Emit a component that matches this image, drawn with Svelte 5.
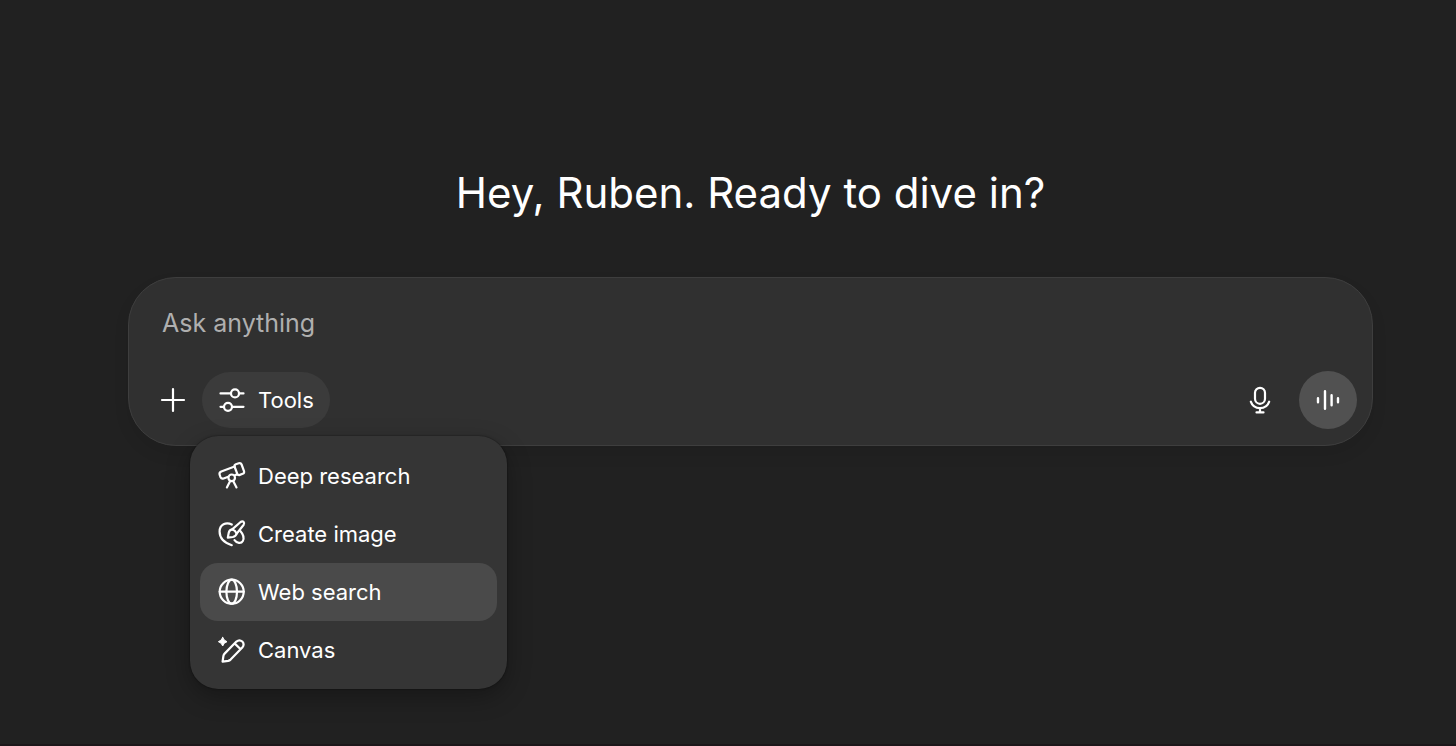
<script lang="ts">
	let prompt = $state('');
	let menuOpen = $state(true);
	let active = $state('web');

	const tools = [
		{ id: 'research', text: 'Deep research' },
		{ id: 'image', text: 'Create image' },
		{ id: 'web', text: 'Web search' },
		{ id: 'canvas', text: 'Canvas' }
	];
</script>

{#snippet icon(name: string)}
	<svg class="icon" viewBox="0 0 28 28" aria-hidden="true">
		{#if name === 'plus'}
			<path d="M14 3v22M3 14h22" />
		{:else if name === 'sliders'}
			<path d="M2.5 7.4h10.3M21 7.4h4.5M2.5 20.8h3.3M14.2 20.8h11.3" />
			<circle cx="17" cy="7.4" r="4" />
			<circle cx="10" cy="20.8" r="4" />
		{:else if name === 'mic'}
			<rect x="9" y="1.8" width="10" height="16" rx="5" />
			<path d="M4.8 15.7C6.2 19.8 9.6 22.200 14 22.200s7.800-2.400 9.200-6.500M14 22.200v4.200M10.500 26.400h7" />
		{:else if name === 'voice'}
			<path class="bars" d="M4 12.200v4M11 5.200v17.600M17.600 9.200v10M24 12.200v4" />
		{:else if name === 'research'}
			<path d="M17.8 2.300 20.800 1.200Q22.800.5 23.600 2.500L26 9.100Q26.700 11.100 24.700 11.800L21.800 12.900Q20 13.500 19.200 11.700L16.700 5Q16 3 17.800 2.300Z" />
			<path d="M16.600 4.500 3.300 9.500Q1 10.500 1.600 12.700L2.500 15.200Q3.400 17.200 5.600 16.500L10.300 14.800M17.200 13.100 19.400 12.300" />
			<circle cx="13.700" cy="15.800" r="3.300" />
			<path d="M12.200 18.900 8.900 25.400M15.200 18.900 18.500 25.400" />
		{:else if name === 'image'}
			<path d="M13.800 25.200C6 22.700 1.600 17.500 1.600 11.500 1.600 4.600 8 1.600 13.800 4.600" />
			<path d="M14.200 9.300 22.600 2Q24.400.8 25.600 1.900 26.800 3.200 25.700 4.700L18.700 13.600" />
			<path d="M14.200 9.300Q11.400 9.800 10.800 12.500L9.800 17.600 14.800 17Q18 16.500 18.700 13.600 17.500 10.500 14.200 9.300Z" />
			<path d="M22.500 11.200C25 14 26.300 18 24.800 21 23.100 24.100 18.800 23.300 16.500 20.200" />
		{:else if name === 'web'}
			<circle cx="13.700" cy="13.700" r="12" />
			<ellipse cx="13.700" cy="13.700" rx="5.300" ry="12" />
			<path d="M1.700 13.700h24" />
		{:else if name === 'canvas'}
			<path class="solid" d="M4.700 1.400Q5.700 4.700 9 5.700 5.700 6.700 4.700 10 3.700 6.700.4 5.700 3.700 4.700 4.700 1.400Z" />
			<path d="M4.600 25.600 5.400 20Q5.600 18.600 6.600 17.600L18.400 5.600Q21.400 3 24.300 5.500 26.900 8.400 24.300 11.600L12.600 23.600Q11.600 24.500 10.200 24.800ZM16.600 7.400 22.600 13.300" />
		{/if}
	</svg>
{/snippet}

<main>
	<h1>Hey, Ruben. Ready to dive in?</h1>

	<form class="composer" onsubmit={(e) => e.preventDefault()}>
		<input type="text" placeholder="Ask anything" aria-label="Ask anything" bind:value={prompt} />
		<div class="actions">
			<button type="button" class="round" aria-label="Add files">
				{@render icon('plus')}
			</button>
			<div class="tools">
				<button
					type="button"
					class="pill"
					aria-haspopup="menu"
					aria-expanded={menuOpen}
					onclick={() => (menuOpen = !menuOpen)}
				>
					{@render icon('sliders')}
					Tools
				</button>
				{#if menuOpen}
					<div class="menu" role="menu">
						{#each tools as tool}
							<button
								type="button"
								role="menuitem"
								class="item"
								class:active={tool.id === active}
								onmouseenter={() => (active = tool.id)}
							>
								{@render icon(tool.id)}
								{tool.text}
							</button>
						{/each}
					</div>
				{/if}
			</div>
			<button type="button" class="round end" aria-label="Dictate">
				{@render icon('mic')}
			</button>
			<button type="button" class="voice" aria-label="Use voice mode">
				{@render icon('voice')}
			</button>
		</div>
	</form>
</main>

<style>
	:global(body) {
		margin: 0;
		background: #212121;
	}

	main {
		box-sizing: border-box;
		min-height: 100vh;
		padding: 163px 83px 0 128px;
		border-bottom: 2px solid #1c171a;
		color: #fff;
		font-family: Inter, 'Liberation Sans', sans-serif;
	}

	h1 {
		margin: 0 0 54px;
		font-size: 42px;
		font-weight: 400;
		line-height: 60px;
		text-align: center;
	}

	button,
	input {
		margin: 0;
		padding: 0;
		border: none;
		background: none;
		color: inherit;
		font: inherit;
	}

	button {
		display: flex;
		align-items: center;
		cursor: pointer;
	}

	.composer {
		display: flex;
		flex-direction: column;
		gap: 28px;
		padding: 25px 15px 16px 16px;
		border: 1px solid #3e3e3e;
		border-radius: 48px;
		background: #303030;
		box-shadow: 0 8px 16px rgba(0, 0, 0, 0.08);
	}

	input {
		height: 40px;
		padding: 0 17px;
		outline: none;
		font-size: 25px;
	}

	input::placeholder {
		color: #afafaf;
		opacity: 1;
	}

	.actions {
		display: flex;
		align-items: center;
	}

	.round {
		justify-content: center;
		width: 56px;
		height: 56px;
		border-radius: 50%;
	}

	.end {
		margin-left: auto;
	}

	.tools {
		position: relative;
		margin-left: 1px;
	}

	.pill {
		gap: 12px;
		height: 56px;
		padding: 0 16px;
		border-radius: 28px;
		background: #3b3b3b;
		font-size: 22px;
	}

	.voice {
		justify-content: center;
		width: 58px;
		height: 58px;
		margin-left: 11px;
		border-radius: 50%;
		background: #515151;
	}

	.menu {
		position: absolute;
		top: 64px;
		left: -12px;
		z-index: 1;
		box-sizing: border-box;
		width: 317px;
		padding: 11px 10px 10px;
		border-radius: 28px;
		background: #353535;
		box-shadow:
			0 0 2px rgba(0, 0, 0, 0.6),
			0 8px 24px rgba(0, 0, 0, 0.3);
	}

	.item {
		gap: 12px;
		width: 100%;
		height: 58px;
		padding: 0 18px;
		border-radius: 18px;
		font-size: 22px;
	}

	.active {
		background: #4a4a4a;
	}

	.icon {
		flex: none;
		width: 28px;
		height: 28px;
		fill: none;
		stroke: currentColor;
		stroke-width: 2.2;
		stroke-linecap: round;
		stroke-linejoin: round;
		overflow: visible;
	}

	.bars {
		stroke-width: 2.4;
	}

	.solid {
		fill: currentColor;
		stroke-width: 1;
	}
</style>
